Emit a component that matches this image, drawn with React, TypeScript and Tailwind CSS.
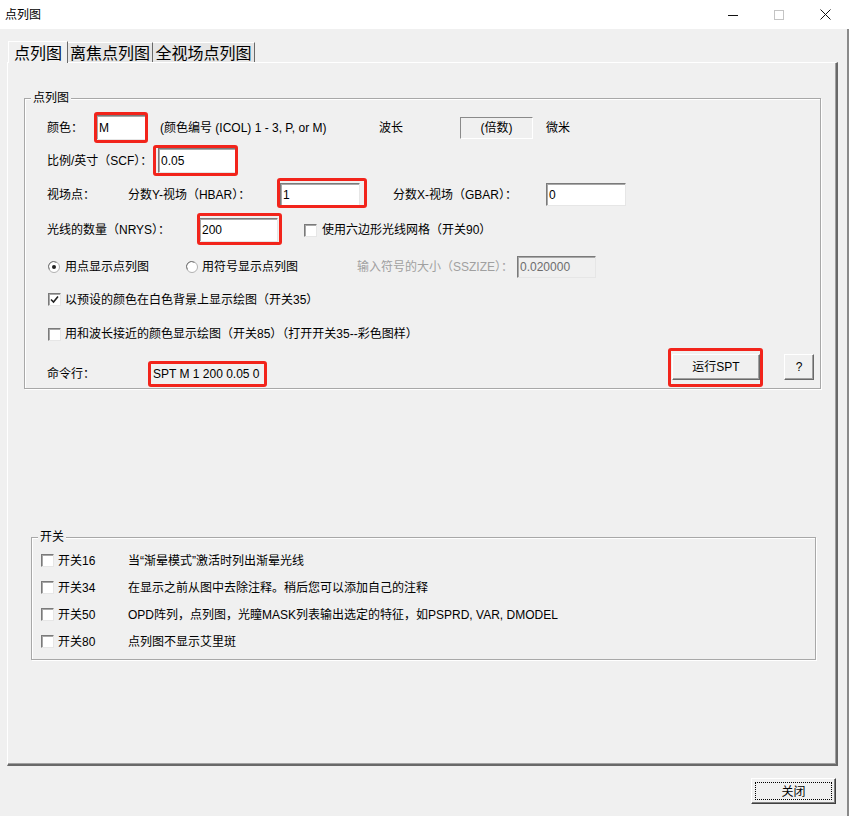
import React from 'react';

const sunken =
  'border border-t-[#7a7a7a] border-l-[#7a7a7a] border-r-[#e6e6e6] border-b-[#e6e6e6] shadow-[inset_1px_1px_0_#a8a8a8]';
const raised =
  'border border-t-white border-l-white border-r-[#696969] border-b-[#696969] shadow-[inset_-1px_-1px_0_#a0a0a0]';

const Field = ({ value, w, h, disabled, red }: {
  value: string; w: string; h: string; disabled?: boolean; red?: string;
}) => (
  <div className={`relative ${w} ${h} ${sunken} ${disabled ? 'bg-[#f0f0f0] text-[#6d6d6d]' : 'bg-white text-black'} flex items-center pl-[2px]`}>
    {value}
    {red && <span className={`absolute ${red} border-[3px] border-[#f2241b] rounded-[3px]`} />}
  </div>
);

const Check = ({ checked }: { checked?: boolean }) => (
  <span className={`w-[13px] h-[13px] shrink-0 bg-white ${sunken} flex items-center justify-center`}>
    {checked && (
      <svg width="9" height="9" viewBox="0 0 9 9">
        <polyline points="1,4.5 3.5,7 8,1.5" fill="none" stroke="#222" strokeWidth="1.6" />
      </svg>
    )}
  </span>
);

const Radio = ({ on }: { on?: boolean }) => (
  <svg width="12" height="12" viewBox="0 0 12 12" className="shrink-0">
    <circle cx="6" cy="6" r="5.5" fill="white" stroke="#b0b0b0" />
    <path d="M1.5 8.5 A5 5 0 0 1 8.5 1.5" fill="none" stroke="#7a7a7a" />
    {on && <circle cx="6" cy="6" r="2" fill="#222" />}
  </svg>
);

const Group = ({ label, className, children }: { label: string; className: string; children: React.ReactNode }) => (
  <div className={`relative border border-[#a8a8a8] shadow-[1px_1px_0_#fff,inset_1px_1px_0_#fff] ${className}`}>
    <span className="absolute -top-[8px] left-[6px] bg-[#f0f0f0] px-[2px] leading-[14px]">{label}</span>
    {children}
  </div>
);

const switches = [
  ['开关16', '当“渐晕模式”激活时列出渐晕光线'],
  ['开关34', '在显示之前从图中去除注释。稍后您可以添加自己的注释'],
  ['开关50', 'OPD阵列，点列图，光瞳MASK列表输出选定的特征，如PSPRD, VAR, DMODEL'],
  ['开关80', '点列图不显示艾里斑'],
];

export default function App() {
  return (
    <div className="w-[849px] h-[816px] flex flex-col bg-[#f0f0f0] text-[12px] text-black font-['Liberation_Sans','Noto_Sans_CJK_SC',sans-serif]">
      {/* title bar */}
      <div className="h-[29px] bg-white flex items-center pl-[5px] shrink-0">
        <span className="flex-1">点列图</span>
        <div className="flex items-center h-full">
          <div className="w-[46px] h-full flex items-center justify-center">
            <svg width="10" height="10" viewBox="0 0 10 10"><line x1="0" y1="5.5" x2="10" y2="5.5" stroke="#111" /></svg>
          </div>
          <div className="w-[46px] h-full flex items-center justify-center">
            <svg width="10" height="10" viewBox="0 0 10 10"><rect x="0.5" y="0.5" width="9" height="9" fill="none" stroke="#c4c4c4" /></svg>
          </div>
          <div className="w-[46px] h-full flex items-center justify-center mr-[1px]">
            <svg width="11" height="11" viewBox="0 0 11 11"><path d="M0.5 0.5 L10.5 10.5 M10.5 0.5 L0.5 10.5" stroke="#111" /></svg>
          </div>
        </div>
      </div>

      <div className="flex-1 flex flex-col border-r-2 border-[#8a8a8a]">
        {/* tabs */}
        <div className="flex items-end pl-[8px] mt-[11px] h-[22px] text-[16px] leading-[20px] font-['Noto_Sans_CJK_SC',sans-serif]">
          <div className="relative z-10 w-[60px] h-[22px] -mb-[1px] bg-[#f0f0f0] border-t border-l border-white border-r border-r-[#696969] text-center">点列图</div>
          <div className="w-[85px] h-[20px] bg-[#e6e6e6] border-t border-white border-r border-r-[#696969] text-center leading-[19px]">离焦点列图</div>
          <div className="w-[102px] h-[20px] bg-[#e6e6e6] border-t border-white border-r border-r-[#696969] text-center leading-[19px]">全视场点列图</div>
        </div>

        {/* tab panel */}
        <div className="ml-[7px] w-[831px] h-[704px] border-t border-l border-white border-r-2 border-b-2 border-r-[#696969] border-b-[#696969] shadow-[inset_-1px_-1px_0_#a0a0a0] flex flex-col">
          <Group label="点列图" className="mt-[35px] ml-[16px] w-[797px] h-[291px] pt-[12px]">
            {/* row 1 */}
            <div className="h-[33px] flex items-center pl-[22px]">
              <span className="w-[49px]">颜色：</span>
              <Field value="M" w="w-[50px]" h="h-[25px]" red="-left-[3px] -right-[3px] -top-[4px] -bottom-[4px]" />
              <span className="ml-[14px] w-[219px]">(颜色编号 (ICOL) 1 - 3, P, or M)</span>
              <span className="w-[81px]">波长</span>
              <div className="w-[73px] h-[22px] border border-t-[#8a8a8a] border-l-[#8a8a8a] border-r-white border-b-white flex items-center justify-center">(倍数)</div>
              <span className="ml-[13px]">微米</span>
            </div>
            {/* row 2 */}
            <div className="h-[33px] flex items-center pl-[22px]">
              <span className="w-[111px]">比例/英寸（SCF）：</span>
              <Field value="0.05" w="w-[79px]" h="h-[25px]" red="-left-[6px] -right-[2px] -top-[4px] -bottom-[4px]" />
            </div>
            {/* row 3 */}
            <div className="h-[35px] flex items-center pl-[22px]">
              <span className="w-[81px]">视场点：</span>
              <span className="w-[152px]">分数Y-视场（HBAR）：</span>
              <Field value="1" w="w-[80px]" h="h-[23px]" red="-left-[4px] -right-[8px] -top-[6px] -bottom-[3px]" />
              <span className="ml-[33px] w-[153px]">分数X-视场（GBAR）：</span>
              <Field value="0" w="w-[80px]" h="h-[23px]" />
            </div>
            {/* row 4 */}
            <div className="h-[36px] flex items-center pl-[22px]">
              <span className="w-[152px]">光线的数量（NRYS）：</span>
              <Field value="200" w="w-[79px]" h="h-[24px]" red="-left-[3px] -right-[5px] -top-[6px] -bottom-[4px]" />
              <span className="ml-[26px]"><Check /></span>
              <span className="ml-[5px]">使用六边形光线网格（开关90）</span>
            </div>
            {/* row 5 */}
            <div className="h-[37px] flex items-center pl-[23px]">
              <Radio on />
              <span className="ml-[5px] w-[121px]">用点显示点列图</span>
              <Radio />
              <span className="ml-[4px] w-[155px]">用符号显示点列图</span>
              <span className="w-[160px] text-[#a0a0a0]">输入符号的大小（SSZIZE）：</span>
              <Field value="0.020000" w="w-[79px]" h="h-[22px]" disabled />
            </div>
            {/* row 6 */}
            <div className="h-[29px] flex items-center pl-[23px]">
              <Check checked />
              <span className="ml-[4px]">以预设的颜色在白色背景上显示绘图（开关35）</span>
            </div>
            {/* row 7 */}
            <div className="h-[40px] flex items-center pl-[23px]">
              <Check />
              <span className="ml-[4px]">用和波长接近的颜色显示绘图（开关85）（打开开关35--彩色图样）</span>
            </div>
            {/* row 8 */}
            <div className="h-[34px] flex items-start pl-[22px] pr-[6px]">
              <span className="w-[101px] mt-[7px] leading-[26px]">命令行：</span>
              <span className="mt-[7px] w-[119px] h-[26px] border-[3px] border-[#f2241b] rounded-[3px] pl-[2px] leading-[20px]">SPT M 1 200 0.05 0</span>
              <div className={`relative ml-auto w-[88px] h-[26px] ${raised} bg-[#f0f0f0] flex items-center justify-center`}>
                运行SPT
                <span className="absolute -left-[5px] -right-[4px] -top-[7px] -bottom-[8px] border-[3px] border-[#f2241b] rounded-[3px]" />
              </div>
              <div className={`ml-[24px] w-[30px] h-[26px] ${raised} bg-[#f0f0f0] flex items-center justify-center`}>?</div>
            </div>
          </Group>

          <Group label="开关" className="mt-[148px] ml-[23px] w-[785px] h-[123px] pt-[9px]">
            {switches.map(([k, d]) => (
              <div key={k} className="h-[27px] flex items-center pl-[9px]">
                <Check />
                <span className="ml-[4px] w-[70px]">{k}</span>
                <span>{d}</span>
              </div>
            ))}
          </Group>
        </div>

        {/* footer */}
        <div className="flex justify-end pr-[11px] mt-[12px]">
          <div className="w-[85px] h-[26px] border border-t-white border-l-white border-r-[#404040] border-b-[#404040] shadow-[inset_-1px_-1px_0_#808080] bg-[#f0f0f0] p-[3px]">
            <div className="w-full h-full border border-dotted border-black flex items-center justify-center font-['Noto_Sans_CJK_SC',sans-serif]">关闭</div>
          </div>
        </div>
      </div>
    </div>
  );
}
